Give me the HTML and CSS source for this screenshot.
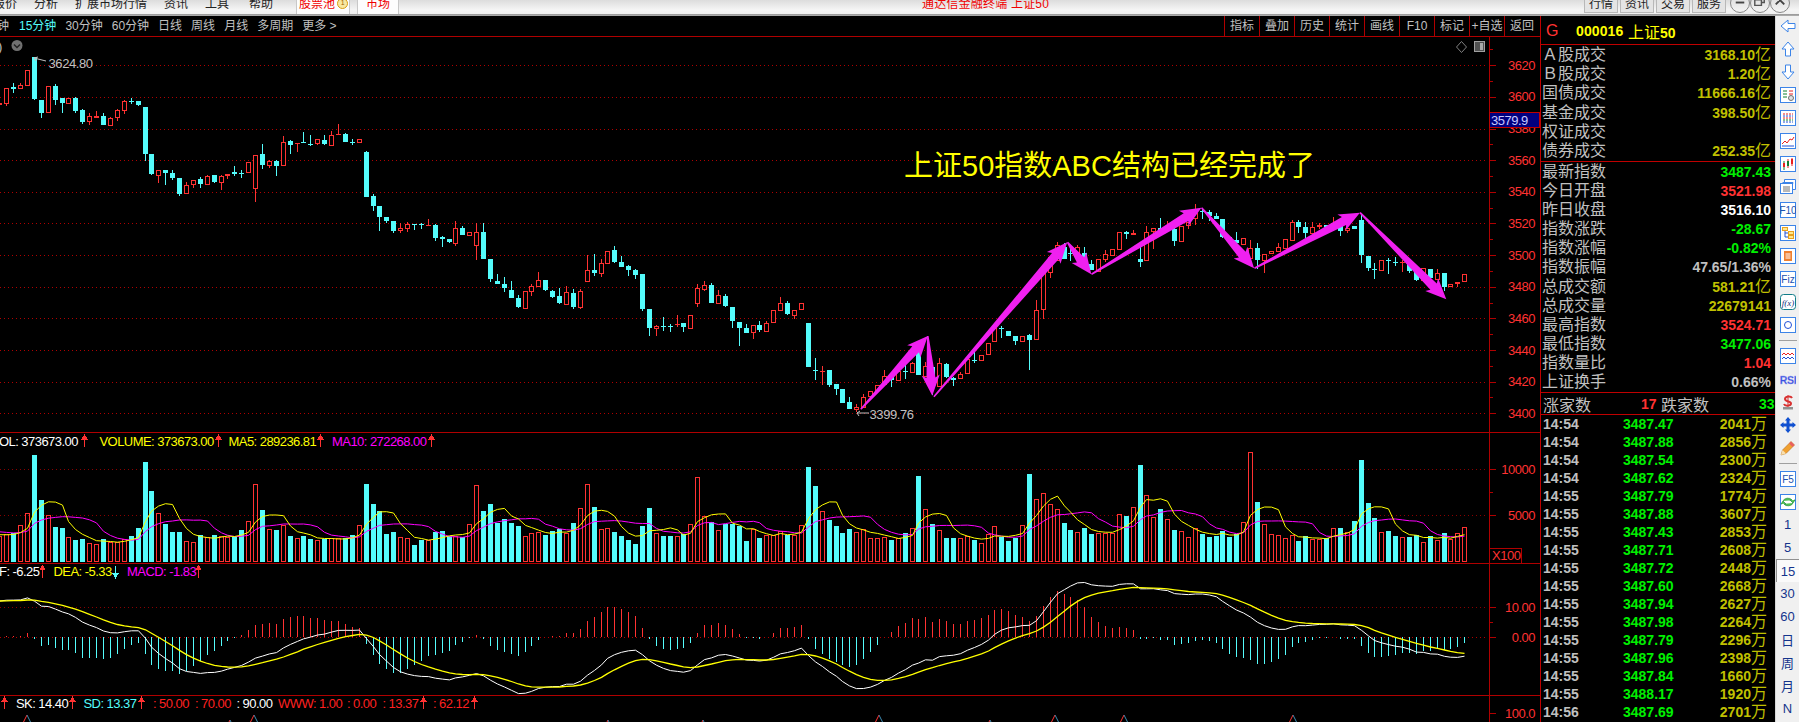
FILE: index.html
```html
<!DOCTYPE html>
<html lang="zh">
<head>
<meta charset="utf-8">
<title>上证50</title>
<link rel="stylesheet" href="styles.css">
<script src="chart.js" defer></script>
</head>
<body>
<header class="menubar">
  <nav class="menu">
    <span class="menu-item">报价</span>
    <span class="menu-item">分析</span>
    <span class="menu-item">扩展市场行情</span>
    <span class="menu-item">资讯</span>
    <span class="menu-item">工具</span>
    <span class="menu-item menu-help">帮助</span>
    <span class="menu-tab menu-tab-pool">股票池<i class="badge">1</i></span>
    <span class="menu-tab">市场</span>
  </nav>
  <div class="title">通达信金融终端 上证50</div>
  <div class="win-tools">
    <span class="win-btn">行情</span>
    <span class="win-btn">资讯</span>
    <span class="win-btn">交易</span>
    <span class="win-btn">服务</span>
    <span class="win-ctl"><svg viewBox="0 0 19 19"><path d="M5 9h9" class="ctl-line"/></svg></span>
    <span class="win-ctl"><svg viewBox="0 0 19 19"><path d="M4 6h7v6H4zM7 6V3h7v6h-3" class="ctl-thin"/></svg></span>
    <span class="win-ctl"><svg viewBox="0 0 19 19"><path d="M5 2l9 9M14 2l-9 9" class="ctl-line"/></svg></span>
  </div>
</header>

<main class="main">
  <section class="chart-col">
    <div class="tabs">
      <div class="periods">
        <span class="period">钟</span>
        <span class="period active">15分钟</span>
        <span class="period">30分钟</span>
        <span class="period">60分钟</span>
        <span class="period">日线</span>
        <span class="period">周线</span>
        <span class="period">月线</span>
        <span class="period">多周期</span>
        <span class="period">更多 &gt;</span>
      </div>
      <div class="actions">
        <span class="action">指标</span>
        <span class="action">叠加</span>
        <span class="action">历史</span>
        <span class="action">统计</span>
        <span class="action">画线</span>
        <span class="action">F10</span>
        <span class="action">标记</span>
        <span class="action">+自选</span>
        <span class="action">返回</span>
      </div>
    </div>
    <svg id="price" class="pane pane-price" viewBox="0 37 1540 395"></svg>
    <svg id="volume" class="pane pane-volume" viewBox="0 433 1540 130"></svg>
    <svg id="macd" class="pane pane-macd" viewBox="0 564 1540 131"></svg>
    <svg id="kdj" class="pane pane-kdj" viewBox="0 696 1540 26"></svg>
  </section>

  <aside class="panel">
    <div class="head">
      <span class="head-g">G</span>
      <span class="head-code">000016</span>
      <span class="head-name">上证<b>50</b></span>
    </div>
    <div class="stats stats-a">
      <div class="row"><span>Ａ股成交</span><span class="val dim">3168.10<i>亿</i></span></div>
      <div class="row"><span>Ｂ股成交</span><span class="val dim">1.20<i>亿</i></span></div>
      <div class="row"><span>国债成交</span><span class="val dim">11666.16<i>亿</i></span></div>
      <div class="row"><span>基金成交</span><span class="val dim">398.50<i>亿</i></span></div>
      <div class="row"><span>权证成交</span></div>
      <div class="row"><span>债券成交</span><span class="val dim">252.35<i>亿</i></span></div>
    </div>
    <div class="stats stats-b">
      <div class="row"><span>最新指数</span><span class="val green">3487.43</span></div>
      <div class="row"><span>今日开盘</span><span class="val red">3521.98</span></div>
      <div class="row"><span>昨日收盘</span><span class="val white">3516.10</span></div>
      <div class="row"><span>指数涨跌</span><span class="val green">-28.67</span></div>
      <div class="row"><span>指数涨幅</span><span class="val green">-0.82%</span></div>
      <div class="row"><span>指数振幅</span><span class="val grey">47.65/1.36%</span></div>
      <div class="row"><span>总成交额</span><span class="val dim">581.21<i>亿</i></span></div>
      <div class="row"><span>总成交量</span><span class="val dim">22679141</span></div>
      <div class="row"><span>最高指数</span><span class="val red">3524.71</span></div>
      <div class="row"><span>最低指数</span><span class="val green">3477.06</span></div>
      <div class="row"><span>指数量比</span><span class="val red">1.04</span></div>
      <div class="row"><span>上证换手</span><span class="val grey">0.66%</span></div>
    </div>
    <div class="breadth">
      <span>涨家数</span><span class="val red b-up">17</span>
      <span class="b-down">跌家数</span><span class="val green b-down-n">33</span>
    </div>
    <div class="trades">
      <div class="trade"><span>14:54</span><span class="tp">3487.47</span><span class="tv">2041<i>万</i></span></div>
      <div class="trade"><span>14:54</span><span class="tp">3487.88</span><span class="tv">2856<i>万</i></span></div>
      <div class="trade"><span>14:54</span><span class="tp">3487.54</span><span class="tv">2300<i>万</i></span></div>
      <div class="trade"><span>14:54</span><span class="tp">3487.62</span><span class="tv">2324<i>万</i></span></div>
      <div class="trade"><span>14:55</span><span class="tp">3487.79</span><span class="tv">1774<i>万</i></span></div>
      <div class="trade"><span>14:55</span><span class="tp">3487.88</span><span class="tv">3607<i>万</i></span></div>
      <div class="trade"><span>14:55</span><span class="tp">3487.43</span><span class="tv">2853<i>万</i></span></div>
      <div class="trade"><span>14:55</span><span class="tp">3487.71</span><span class="tv">2608<i>万</i></span></div>
      <div class="trade"><span>14:55</span><span class="tp">3487.72</span><span class="tv">2448<i>万</i></span></div>
      <div class="trade"><span>14:55</span><span class="tp">3487.60</span><span class="tv">2668<i>万</i></span></div>
      <div class="trade"><span>14:55</span><span class="tp">3487.94</span><span class="tv">2627<i>万</i></span></div>
      <div class="trade"><span>14:55</span><span class="tp">3487.98</span><span class="tv">2264<i>万</i></span></div>
      <div class="trade"><span>14:55</span><span class="tp">3487.79</span><span class="tv">2296<i>万</i></span></div>
      <div class="trade"><span>14:55</span><span class="tp">3487.96</span><span class="tv">2398<i>万</i></span></div>
      <div class="trade"><span>14:55</span><span class="tp">3487.84</span><span class="tv">1660<i>万</i></span></div>
      <div class="trade"><span>14:55</span><span class="tp">3488.17</span><span class="tv">1920<i>万</i></span></div>
      <div class="trade"><span>14:56</span><span class="tp">3487.69</span><span class="tv">2701<i>万</i></span></div>
    </div>
  </aside>

  <aside class="toolbar">
    <span class="tool tool-first"><svg viewBox="0 0 16 16"><path class="ic" d="M1 8l7-6v3.500h7v5H8V14z"/></svg></span>
    <span class="tool"><svg viewBox="0 0 16 16"><path class="ic" d="M8 1l6 7h-3.500v7h-5V8H2z"/></svg></span>
    <span class="tool"><svg viewBox="0 0 16 16"><path class="ic" d="M8 15l6-7h-3.500V1h-5v7H2z"/></svg></span>
    <span class="tool"><svg viewBox="0 0 16 16"><rect class="box" x=".5" y=".5" width="15" height="15"/><path class="g" d="M3 4h4M3 7h4M3 10h4"/><path class="r" d="M9 4h4M9 7h4"/><circle class="gear" cx="11" cy="11" r="2.500"/></svg></span>
    <span class="tool"><svg viewBox="0 0 16 16"><rect class="box" x=".5" y=".5" width="15" height="15"/><path class="r dash" d="M3 4h10M3 8h10"/><path class="b dash" d="M3 6h10M3 12h10"/><path class="g dash" d="M3 10h10"/></svg></span>
    <span class="tool"><svg viewBox="0 0 16 16"><rect class="box" x=".5" y=".5" width="15" height="15"/><path class="r" d="M2 11l3-3 2 2 3-4 2 1 2-3"/><path class="b" d="M2 13h12"/></svg></span>
    <span class="tool"><svg viewBox="0 0 16 16"><rect class="box" x=".5" y=".5" width="15" height="15"/><path class="g" d="M4 5v9"/><rect class="rf" x="3" y="7" width="2" height="4"/><path class="r" d="M8 3v9"/><rect class="gf" x="7" y="5" width="2" height="5"/><path class="r" d="M12 2v8"/><rect class="rf" x="11" y="3" width="2" height="5"/></svg></span>
    <span class="tool"><svg viewBox="0 0 16 16"><path class="ic" d="M4.500 3.500V.5h11v10H13M2.500 3.500h10.500v1"/><rect class="box" x=".5" y="4.500" width="12" height="10"/><path class="grey-l" d="M3 8h7M3 10h7M3 12h7"/></svg></span>
    <span class="tool"><svg viewBox="0 0 16 16"><rect class="box" x=".5" y=".5" width="15" height="15"/><text class="ict" x="8" y="12">F10</text></svg></span>
    <span class="tool"><svg viewBox="0 0 16 16"><rect class="box" x=".5" y=".5" width="15" height="15"/><rect class="o" x="2.500" y="2.500" width="5" height="3"/><rect class="o" x="8.500" y="6.500" width="5" height="3"/><rect class="o" x="8.500" y="10.500" width="5" height="3"/><path class="b" d="M5 6v6h3M5 8h3"/></svg></span>
    <span class="tool"><svg viewBox="0 0 16 16"><rect class="box" x=".5" y=".5" width="15" height="15"/><rect class="of" x="4" y="3" width="8" height="10"/><path class="w" d="M5.500 6h5M5.500 8h5M5.500 10h5"/></svg></span>
    <span class="tool"><svg viewBox="0 0 16 16"><rect class="box" x=".5" y=".5" width="15" height="15"/><text class="ict" x="8" y="12">Fiz</text></svg></span>
    <span class="tool"><svg viewBox="0 0 16 16"><rect class="box teal" x=".5" y=".5" width="15" height="15" rx="3"/><text class="icf" x="8" y="12">f(x)</text></svg></span>
    <span class="tool"><svg viewBox="0 0 16 16"><rect class="box" x=".5" y=".5" width="15" height="15"/><circle class="b" cx="8" cy="8" r="3.500"/></svg></span>
    <span class="tool-sep"></span>
    <span class="tool"><svg viewBox="0 0 16 16"><rect class="box" x=".5" y=".5" width="15" height="15"/><path class="r" d="M2 7l2-2 2 2 2-2 2 2 2-2 2 2"/><path class="b" d="M2 11l2-2 2 2 2-2 2 2 2-2 2 2"/></svg></span>
    <span class="tool"><svg viewBox="0 0 16 16"><text class="icr" x="8" y="12.500">RSI</text></svg></span>
    <span class="tool"><svg viewBox="0 0 16 16"><path class="money-base" d="M3 13h10v2.500H3z"/><path class="money" d="M12 4c-1-2-7-2-7 1 0 3 6 2 6 4.500s-6 3-7 .5"/><path class="money-thin" d="M8 1v12"/></svg></span>
    <span class="tool"><svg viewBox="0 0 16 16"><path class="move" d="M8 0l3 3.500H9.500v3h3V5L16 8l-3.500 3V9.500h-3v3H11L8 16l-3-3.500h1.500v-3h-3V11L0 8l3.500-3v1.500h3v-3H5z"/></svg></span>
    <span class="tool"><svg viewBox="0 0 16 16"><path class="pencil" d="M1 15l1.500-5L11 1.500 14.500 5 6 13.500z"/><path class="pencil-tip" d="M1 15l1.500-5L6 13.500z"/><path class="pencil-end" d="M11 1.500L14.500 5l-2 2L9 3.500z"/></svg></span>
    <span class="tool-sep"></span>
    <span class="tool"><svg viewBox="0 0 16 16"><rect class="box" x=".5" y=".5" width="15" height="15"/><text class="ict" x="8" y="12">F5</text></svg></span>
    <span class="tool"><svg viewBox="0 0 16 16"><rect class="box" x=".5" y=".5" width="15" height="15"/><path class="refresh" d="M3 7a5 4 0 0 1 9-1h-2l3 3 2-3h-1M13 9a5 4 0 0 1-9 1h2l-3-3-2 3h1"/></svg></span>
    <span class="tool tool-t">1</span>
    <span class="tool tool-t">5</span>
    <span class="tool tool-t tool-on">15</span>
    <span class="tool tool-t">30</span>
    <span class="tool tool-t">60</span>
    <span class="tool tool-t">日</span>
    <span class="tool tool-t">周</span>
    <span class="tool tool-t">月</span>
    <span class="tool tool-t">N</span>
  </aside>
</main>
</body>
</html>
```

FILE: styles.css
```css
* { box-sizing: border-box; }
html, body { margin: 0; height: 100%; background: #000; overflow: hidden; }
body {
  width: 1799px; height: 722px;
  font-family: "Liberation Sans", "Noto Sans CJK SC", sans-serif;
  display: flex; flex-direction: column;
}
i { font-style: normal; }

.menubar {
  height: 16px; flex: none; display: flex; align-items: flex-start;
  background: linear-gradient(#dcdcdc, #f4f4f4 60%, #f0f0f0 85%, #9a9a9a 90%, #b0b0b0);
  font-size: 12px; line-height: 8px; color: #222; overflow: hidden; white-space: nowrap;
}
.menu { display: flex; align-items: flex-start; gap: 17px; margin-left: -7px; flex: none; }
.menu-help { margin-left: 3px; }
.menu-tab {
  height: 14px; padding: 0 8px; color: #f00000; background: #fdfdfd; flex: none;
  border-left: 1px solid #c8c8c8; border-right: 1px solid #c8c8c8;
  display: flex; align-items: flex-start;
}
.menu-tab-pool { margin-left: 6px; margin-right: -10px; padding: 0 0 0 2px; width: 54px; }
.badge {
  width: 11px; height: 11px; border-radius: 50%; border: 1.500px solid #d89c10; background: #f8e8a0;
  margin: -2px 0 0 2px; flex: none; font-size: 7px; line-height: 8px; text-align: center; color: #a06000;
}
.title { margin: 0 auto; padding-right: 12px; color: #f00000; letter-spacing: .2px; }
.win-tools { display: flex; align-items: flex-start; margin-right: 9px; flex: none; }
.win-btn {
  width: 34px; height: 13px; margin-right: 2px; text-align: center;
  background: #e4e4e4; border: 1px solid #b8b8b8; border-top: 0; color: #222;
}
.win-ctl {
  width: 20px; height: 20px; margin-top: -7px; border-radius: 50%; flex: none;
  background: linear-gradient(#d8d8d8, #f4f4f4); border: 1px solid #888;
}
.win-btn + .win-ctl { margin-left: 2px; }
.win-ctl svg { display: block; width: 100%; height: 100%; }
.ctl-line { stroke: #444; stroke-width: 2; fill: none; }
.ctl-thin { stroke: #555; stroke-width: 1.500; fill: none; }

.main { flex: 1; display: flex; min-height: 0; }
.chart-col { width: 1540px; flex: none; display: flex; flex-direction: column; background: #000; }

.tabs {
  height: 21px; flex: none; display: flex; justify-content: space-between;
  border-bottom: 1px solid #b00000; font-size: 12px; line-height: 20px; color: #c0c0c0; overflow: hidden;
}
.periods { display: flex; gap: 9px; margin-left: -3px; white-space: nowrap; }
.period:nth-child(2) { margin-left: 1px; }
.period.active { color: #54fcfc; }
.actions { display: flex; margin-right: 1px; }
.action { width: 35px; text-align: center; border-left: 1px solid #b00000; white-space: nowrap; }

.pane { display: block; width: 1540px; flex: none; border-bottom: 1px solid #b00000; box-sizing: content-box; }
.pane-price { height: 395px; }
.pane-volume { height: 130px; }
.pane-macd { height: 131px; }
.pane-kdj { height: 26px; border-bottom: 0; }

.axis { stroke: #b00000; stroke-width: 1; shape-rendering: crispEdges; }
.grid { stroke: #b00000; stroke-width: 1; stroke-dasharray: 1 3; shape-rendering: crispEdges; }
.grid-dim { stroke: #8a0000; }
.cand { shape-rendering: crispEdges; }
.up-body { fill: #000; stroke: #ff3232; stroke-width: 1; }
.up-hollow { fill: none; stroke: #ff3232; stroke-width: 1; }
.down-body { fill: #54fcfc; }
.up-wick { stroke: #ff3232; stroke-width: 1; }
.down-wick { stroke: #54fcfc; stroke-width: 1; }
.ax-text { font-size: 13px; letter-spacing: -.5px; fill: #ff3232; text-anchor: end; }
.ax-x100 { text-anchor: start; }
.ax-box { fill: none; stroke: #b00000; shape-rendering: crispEdges; }
.cur-box { fill: #000080; stroke: #c00000; shape-rendering: crispEdges; }
.cur-text { font-size: 13px; letter-spacing: -.5px; fill: #c8c8ff; }
.mark-text { font-size: 13px; letter-spacing: -.4px; fill: #c0c0c0; }
.mark-line { fill: none; stroke: #c0c0c0; stroke-width: 1; }
.note { font-size: 29px; fill: #ffff00; font-family: "Liberation Sans", "Noto Sans CJK SC", sans-serif; }
.wedge { fill: #f020f0; }
.lg { font-size: 13px; letter-spacing: -.55px; }
.c-white { fill: #ffffff; }
.c-yellow { fill: #ffff00; }
.c-magenta { fill: #ff00ff; }
.c-cyan { fill: #54fcfc; }
.c-red { fill: #ff2020; }
.flag-up { stroke: #ff3232; fill: #ff3232; stroke-width: 1; shape-rendering: crispEdges; }
.flag-down { stroke: #54fcfc; fill: #54fcfc; stroke-width: 1; shape-rendering: crispEdges; }
.ln { fill: none; stroke-width: 1; }
.ln-y { stroke: #ffff00; }
.ln-m { stroke: #ff00ff; }
.ln-w { stroke: #ffffff; }
.ln-r { stroke: #ff3232; }
.ln-b { stroke: #3c8cb4; }
.ln-thick { stroke-width: 1.300; }
.ico-grey { fill: #707070; }
.ico-chev { fill: none; stroke: #222; stroke-width: 1.500; }
.ico-out { fill: none; stroke: #808080; stroke-width: 1; }
.ico-fill { fill: #505050; stroke: #a0a0a0; stroke-width: 1; shape-rendering: crispEdges; }
.ico-bar { fill: #a8a8a8; }

.panel { width: 235px; flex: none; background: #000; border-left: 1px solid #c00000; display: flex; flex-direction: column; color: #c0c0c0; font-size: 16px; overflow: hidden; }
.head { height: 29px; flex: none; border-top: 0; border-bottom: 1px solid #c00000; display: flex; align-items: center; padding-top: 1px; }
.head-g { color: #ff3232; width: 35px; padding-left: 5px; }
.head-code { color: #ffff00; font-weight: 700; font-size: 14px; letter-spacing: .1px; width: 52px; }
.head-name { color: #ffff00; }
.head-name b { font-size: 14px; }
.stats { flex: none; display: flex; flex-direction: column; border-bottom: 1px solid #c00000; padding: 0 4px 0 1px; }
.stats-a { height: 117px; }
.stats-b { height: 231px; }
.row { flex: 1; display: flex; justify-content: space-between; align-items: center; line-height: 1; white-space: nowrap; }
.val { font-weight: 700; font-size: 14px; }
.val i, .tv i { font-weight: 400; font-size: 16px; }
.dim { color: #c0c000; }
.green { color: #00f000; }
.red { color: #ff3232; }
.white { color: #fff; }
.grey { color: #c0c0c0; }
.breadth { height: 22px; flex: none; border-bottom: 1px solid #c00000; display: flex; align-items: center; padding-left: 2px; }
.b-up { margin-left: 50px; width: 20px; }
.b-down { flex: none; }
.b-down-n { margin-left: 50px; }
.trades { flex: 1; font-weight: 700; font-size: 14px; padding-left: 2px; }
.trade { height: 18px; display: grid; grid-template-columns: 80px 76px 71px; align-items: center; line-height: 18px; }
.tp { color: #00f000; }
.tv { color: #c0c000; text-align: right; padding-right: 3px; }

.toolbar { flex: 1; background: #f0f0f0; border-left: 1px solid #d8d8d8; display: flex; flex-direction: column; align-items: center; overflow: hidden; }
.tool { height: 23px; width: 100%; flex: none; display: flex; align-items: center; justify-content: center; }
.tool-first { margin-top: -2px; }
.tool svg { width: 16px; height: 16px; display: block; }
.tool-sep { height: 8px; width: 18px; flex: none; display: flex; align-items: center; }
.tool-sep::before { content: ""; display: block; width: 100%; height: 1px; background: #a0a0a0; }
.tool-t { color: #14348c; font-size: 13px; }
.tool-on { background: #fafafa; border-top: 1px solid #909090; border-left: 1px solid #909090; }
.ic, .box { fill: #fff; stroke: #3c84e8; stroke-width: 1; }
.teal { stroke: #107c88; }
.g, .r, .b, .o, .w, .grey-l { fill: none; stroke-width: 1; }
.g { stroke: #108030; }
.r { stroke: #e82020; }
.b { stroke: #2050d8; }
.o { stroke: #e8a020; fill: #ffe88c; }
.w { stroke: #fff; }
.grey-l { stroke: #707070; }
.dash { stroke-dasharray: 2 1; }
.gear { fill: #e0e0e0; stroke: #707070; }
.rf { fill: #e82020; }
.gf { fill: #108030; }
.of { fill: #f08030; }
.ict { font-size: 10px; fill: #2050b0; text-anchor: middle; font-family: "Liberation Sans", sans-serif; }
.icf { font-size: 9px; font-style: italic; fill: #103080; text-anchor: middle; font-family: "Liberation Serif", serif; }
.icr { font-size: 10.500px; font-weight: 700; fill: #3850e0; text-anchor: middle; letter-spacing: -.3px; stroke: #a0a8f0; stroke-width: .3px; }
.money { fill: none; stroke: #d83030; stroke-width: 2; }
.money-thin { fill: none; stroke: #d83030; stroke-width: 1; }
.money-base { fill: #909090; }
.move { fill: #1050d0; }
.pencil { fill: #f0a030; stroke: #a86010; stroke-width: .5; }
.pencil-tip { fill: #f8e0b0; }
.pencil-end { fill: #e86060; }
.refresh { fill: #50c050; stroke: #209040; stroke-width: .7; }
```

FILE: chart.js
```js
(function () {
  // Candle data: t=body top, b=body bottom, h=high, l=low (screen rows x3, relative to a base row)
  var segments = [
    [40, "R190,194 R145,191,,197 C141,147,130,158 R135,146,130 R91,137 C52,178,50,180 C180,218,,234 R139,218 C138,180,132,195 C175,189,,218 R175,191 C174,213,172,218 C210,246,208,252 R229,245,219,255 R229,233,213 C228,255,219 R235,257,232 R211,233,207,243 R184,212,180,221 C182,184,174,191 C183,195,,198 C201,342,,362 C342,402,,405 R391,407,,429 C391,398,,434 C399,414,390,419 C414,462,,467 R436,461,427 R419,434,,443 C417,431,411,444 R409,434,406,436 C406,426,,428 R409,428,406,450 R401,407,,416 C397,401,378,409 C399,400,390,413 R367,398 R346,448,,486 C343,374,312,387 R364,377,361,384 C364,378,360,408 R307,377,289 C304,314,300,342 R310,313,,336 C306,308,277 C311,313,285,318 R298,311,,314 C301,312,285,315 R286,317,274 R281,286,252 C282,305,279 C305,307,297,315 R298,308 C336,470,333 C468,497,462,513 C498,530,,573 C532,543,,549 C544,572,,578 R565,572,550,578 R552,566,547,575 C552,554,,570 C553,555,549,566 R556,559,537"],
    [220, "C16,53,13,62 C52,56,47,80 C57,66,,70 R25,72,3,77 C24,44,18 R37,49 R37,77,10,120"],
    [220, "C36,117,8 C117,177,,186 C183,193,163 C192,205,171,215 C210,235,183 C234,262,226,264 R214,267 R198,215,193,228 R181,200,156 C180,210,,213 C213,232,209,234 C228,249,204,252 R217,254,198 C219,262,208,266 R214,263,208,266 R151,185,104 C151,159,102,167 R130,161,118,171 R94,131 C90,126,78,130 C126,141,108 C138,150,135,168 C150,165,146,177 C162,267,,273 C267,323,,348 R319,326,316,348 C318,321,291,333 C318,322,312,335 R312,315,285,320 C309,321,,336 R286,326 R205,251,192,261 R196,209,183,212 C195,249,190 R226,251,209 C228,258,222,261 C261,303,,324 C306,324,,378 C324,339,312 R316,339,,357 C316,330,303,335 R310,335,302 R271,308 R250,272,231 C249,282,243,285 R271,288,,297 R250,270 C309,441 C451,453,415,480 R453,455,438,495 C450,495,,500 C492,507,,526 C507,549 C546,567,531 R562,569,552,575 R531,564,522 R514,532 R495,514 R469,496,450 C470,480,,500 R452,484 C452,455,435,477 R429,458,425 C395,465 R438,470,425 C440,500,,524 R430,500,415 C432,472,430,475 C474,479,470,497 R462,478,457 R418,461 C420,423,395,428 R406,424 R370,406 R325,367"],
    [190, "C414,417,408,444 C424,437 C438,452,,465 R439,456 C435,450,432,540 R361,449,330 R247,361,,388 R200,248,,263 R165,214,156 C170,207,160 C189,191,172,212 R170,205,165 C189,201,170,225 C222,240,210 R208,245 R192,209,180,215 R178,197 R127,179 C126,131,123,147 R130,136,121 C207,215,170,230 R127,212,108 R115,127,,178 C115,125,84 R115,118,94 C117,152,112,167 R107,155 R95,107,,118 R68,88,42,104 C64,66,55,87 C66,78,60,92 C78,88,69 C87,140,,145 C140,150 C150,158,127 R145,164 R175,208,150 C174,209,160,238 R193,213,,248 R183,191 R172,185,160 R148,176 R97,152,90 C97,110,90,128 C112,128,96,143 R112,131,97 R105,112,100,118 C104,110 R100,108,80 C108,123,,137 R113,124,,130 C108,116 C90,194,76,218 C199,233,,242 C237,238,220,266 R211,242 C210,213,205,251 C215,219,202,228 R215,217,210,245 C222,243,,250 C245,270,,273 R235,272 C238,265 R250,270,238 C250,290,,302 R281,292 R275,281,,290 R253,275"]
  ];
  var candles = [];
  segments.forEach(function (seg) {
    seg[1].split(" ").forEach(function (s) {
      var up = s[0] === "R";
      var p = s.slice(1).split(",");
      var t = +p[0], b = +p[1];
      var h = p[2] ? +p[2] : t, l = p[3] ? +p[3] : b;
      candles.push({
        up: up,
        t: seg[0] + t / 3, b: seg[0] + b / 3,
        h: seg[0] + h / 3, l: seg[0] + l / 3
      });
    });
  });

  // Volume bar tops (rows x3 from 420); negative = cyan bar. First value is index -1.
  var vols = [347,
    343,-338,316,280,-105,-240,286,-321,-324,352,
    -360,-357,370,372,-357,367,367,357,-348,-324,
    -126,-213,280,-312,-336,-336,364,367,-345,352,
    -345,348,352,-351,-330,304,193,-270,328,-330,
    314,-348,355,-348,-357,361,-357,355,355,-355,
    -345,316,-192,-252,-273,-342,-336,352,355,-375,
    -360,360,-336,-333,-348,348,-352,312,195,-273,
    -252,-309,-297,-309,-318,348,340,336,-345,-333,
    -328,340,-309,265,192,-261,328,325,-336,-348,
    -360,-372,-318,-264,340,-348,-348,349,-342,313,
    172,289,-306,330,-312,-311,-318,-363,326,-354,
    345,345,332,-345,345,316,-141,-198,273,-300,
    -318,-339,-327,336,328,355,355,352,-360,355,
    -339,325,-168,268,-312,330,-354,-354,355,348,
    -360,370,343,319,-351,-363,-354,316,-162,238,
    220,253,268,-309,-330,337,-324,-342,340,340,
    339,283,-288,262,-135,226,292,-267,298,-330,
    334,352,325,-342,-351,-348,-333,-351,-342,307,
    97,-246,313,343,346,355,345,-363,-348,358,
    358,-354,325,-324,336,-303,-120,-249,-294,337,
    -333,-348,352,-351,-345,367,-348,361,-339,358,
    340,322];

  function xOf(i) { return Math.round(6.3 + 6.91 * i); }
  function idx(n) { return n - 1; }

  function yPrice(p) { return 413.3 - (p - 3400) * 1.582; }

  function vline(x, a, b, c) { return '<line class="' + c + '" x1="' + (x + .5) + '" x2="' + (x + .5) + '" y1="' + a + '" y2="' + b + '"/>'; }
  function hline(a, b, y, c) { return '<line class="' + c + '" x1="' + a + '" x2="' + b + '" y1="' + y + '" y2="' + y + '"/>'; }
  function txt(x, y, s, c) { return '<text class="' + c + '" x="' + x + '" y="' + y + '">' + s + '</text>'; }
  function poly(pts, c) { return '<polyline class="' + c + '" points="' + pts.map(function (p) { return p[0].toFixed(1) + ',' + p[1].toFixed(1); }).join(' ') + '"/>'; }
  function axisLabel(y, s) { return txt(1535, y + 4.5, s, 'ax-text'); }

  /* ---------- price pane ---------- */
  function wedge(x1, y1, x2, y2) {
    var dx = x2 - x1, dy = y2 - y1, L = Math.sqrt(dx * dx + dy * dy);
    var ux = dx / L, uy = dy / L, nx = -uy, ny = ux;
    var head = 18, neck = L - head, barbAt = L - head * 1.15;
    var s = 4.5;
    function P(a, n) { return (x1 + ux * a + nx * n).toFixed(1) + ',' + (y1 + uy * a + ny * n).toFixed(1); }
    return '<polygon class="wedge" points="' + [P(0, 0.8), P(neck, s), P(barbAt, 9), P(L, 0), P(barbAt, -9), P(neck, -s), P(0, -0.8)].join(' ') + '"/>';
  }

  var out = [];
  [3620, 3600, 3580, 3560, 3540, 3520, 3500, 3480, 3460, 3440, 3420, 3400].forEach(function (p) {
    var y = Math.round(yPrice(p)) + .5;
    out.push(hline(0, 1487, y, 'grid'));
    out.push(hline(1489, 1496, y, 'axis'));
    out.push(axisLabel(yPrice(p), p));
    out.push(hline(1489, 1493, Math.round(yPrice(p + 10)) + .5, 'axis'));
  });
  out.push(vline(1489, 37, 432, 'axis'));
  candles.forEach(function (c, n) {
    var x = xOf(idx(n));
    var t = Math.round(c.t), b = Math.max(Math.round(c.b), t + 1);
    if (c.up) {
      out.push(vline(x, Math.round(c.h), t, 'cand up-wick'));
      out.push(vline(x, b, Math.round(c.l), 'cand up-wick'));
      if (b - t <= 1) out.push(hline(x - 2, x + 3, t + .5, 'cand up-wick'));
      else out.push('<rect class="cand up-body" x="' + (x - 1.5) + '" y="' + (t + .5) + '" width="4" height="' + (b - t - 1) + '"/>');
    } else {
      out.push(vline(x, Math.round(c.h), Math.round(c.l), 'cand down-wick'));
      out.push('<rect class="cand down-body" x="' + (x - 2) + '" y="' + t + '" width="5" height="' + (b - t) + '"/>');
    }
  });
  out.push(wedge(860.8, 409.3, 927.8, 336));
  out.push(wedge(927.8, 336, 932.3, 395.7));
  out.push(wedge(933.9, 396.7, 1067.2, 242.3));
  out.push(wedge(1067.5, 242.3, 1091.3, 274.3));
  out.push(wedge(1091.5, 274.3, 1201.4, 207.7));
  out.push(wedge(1201.6, 207.7, 1254.1, 268.3));
  out.push(wedge(1254.5, 268.3, 1359.9, 212.7));
  out.push(wedge(1360, 212.7, 1446.3, 299.3));
  out.push(txt(904, 176, '上证50指数ABC结构已经完成了', 'note'));
  out.push(txt(48.5, 67.5, '3624.80', 'mark-text'));
  out.push('<path class="mark-line" d="M34 58l12 3M34 58l4-1M34 58l2 3"/>');
  out.push(txt(869.5, 419, '3399.76', 'mark-text'));
  out.push('<path class="mark-line" d="M857 413h12M857 413l3-2M857 413l2 3"/>');
  out.push(txt(-2, 51, ')', 'mark-text'));
  out.push('<circle class="ico-grey" cx="17" cy="45.500" r="5.500"/><path class="ico-chev" d="M14 44.500l3 3 3-3"/>');
  out.push('<path class="ico-out" d="M1461.500 41.500l5 5.500-5 5.500-5-5.500z"/>');
  out.push('<rect class="ico-fill" x="1474.500" y="41.500" width="10" height="10" rx="1"/><rect class="ico-bar" x="1480" y="43" width="3" height="7"/>');
  out.push('<rect class="cur-box" x="1489.500" y="112.500" width="50" height="15"/>');
  out.push(txt(1491, 124.500, '3579.9', 'cur-text'));
  document.getElementById('price').innerHTML = out.join('');

  /* ---------- flags ---------- */
  function flag(x, y, up) {
    var mid = y;
    if (up) return '<path class="flag-up" d="M' + (x + .5) + ' ' + (mid + 6) + 'V' + (mid - 3) + '"/><polygon class="flag-up" points="' + (x - 2) + ',' + (mid - 2) + ' ' + (x + .5) + ',' + (mid - 6) + ' ' + (x + 3) + ',' + (mid - 2) + '"/>';
    return '<path class="flag-down" d="M' + (x + .5) + ' ' + (mid - 6) + 'V' + (mid + 3) + '"/><polygon class="flag-down" points="' + (x - 2) + ',' + (mid + 2) + ' ' + (x + .5) + ',' + (mid + 6) + ' ' + (x + 3) + ',' + (mid + 2) + '"/>';
  }
  function legend(items, y) {
    return items.map(function (it) {
      if (it[1] === 'up' || it[1] === 'down') return flag(it[0], y, it[1] !== 'down');
      return txt(it[0], y + 4.5, it[1], 'lg ' + it[2]);
    }).join('');
  }

  /* ---------- volume pane ---------- */
  out = [];
  [469, 515].forEach(function (y) { out.push(hline(0, 1487, y + .5, 'grid grid-dim')); });
  out.push(vline(1489, 433, 563, 'axis'));
  out.push(hline(1489, 1496, 469.5, 'axis')); out.push(hline(1489, 1496, 515.5, 'axis')); out.push(hline(1489, 1493, 492.5, 'axis'));
  out.push(axisLabel(469.3, '10000')); out.push(axisLabel(515.3, '5000'));
  var heights = vols.map(function (v) { return (426 - Math.abs(v)) / 3; });
  vols.forEach(function (v, n) {
    var x = xOf(idx(n)), top = Math.round(420 + Math.abs(v) / 3);
    if (v > 0) out.push('<rect class="cand up-hollow" x="' + (x - 1.5) + '" y="' + (top + .5) + '" width="4" height="' + (561.5 - top - .5) + '"/>');
    else out.push('<rect class="cand down-body" x="' + (x - 2) + '" y="' + top + '" width="5" height="' + (562 - top) + '"/>');
  });
  function ma(len) {
    var pts = [];
    var pad = [34, 34, 34, 34, 34, 30, 28, 28, 27, 27];
    var all = pad.concat(heights);
    for (var n = 0; n < heights.length; n++) {
      var sum = 0;
      for (var k = 0; k < len; k++) sum += all[n + pad.length - k];
      pts.push([xOf(idx(n)) + .5, 562 - sum / len]);
    }
    return pts;
  }
  out.push(poly(ma(10), 'ln ln-m'));
  out.push(poly(ma(5), 'ln ln-y'));
  out.push(legend([
    [-1, 'OL: 373673.00', 'c-white'], [84, 'up'],
    [99.5, 'VOLUME: 373673.00', 'c-yellow'], [218, 'up'],
    [228.5, 'MA5: 289236.81', 'c-yellow'], [320, 'up'],
    [332, 'MA10: 272268.00', 'c-magenta'], [431, 'up']
  ], 441));
  out.push('<rect class="ax-box" x="1489.500" y="548.500" width="32" height="15"/>');
  out.push(txt(1492, 560, 'X100', 'ax-text ax-x100'));
  document.getElementById('volume').innerHTML = out.join('');

  /* ---------- MACD pane ---------- */
  out = [];
  out.push(hline(0, 1487, 607.5, 'grid grid-dim'));
  out.push(hline(0, 1487, 637.5, 'grid'));
  out.push(vline(1489, 564, 695, 'axis'));
  out.push(hline(1489, 1496, 607.5, 'axis')); out.push(hline(1489, 1496, 637.5, 'axis')); out.push(hline(1489, 1493, 622.5, 'axis'));
  out.push(axisLabel(607.3, '10.00')); out.push(axisLabel(637.3, '0.00'));
  var closes = candles.map(function (c) { return 3400 + (413.3 - (c.up ? c.t : c.b)) / 1.582; });
  var e12 = closes[0] - 5, e26 = e12 - 12.1, dea = 12.1;
  var white = [], yellow = [];
  var K = 3;
  closes.forEach(function (p, n) {
    if (n > 0) {
      e12 += (p - e12) * 2 / 13;
      e26 += (p - e26) * 2 / 27;
      dea += (e12 - e26 - dea) * 2 / 10;
    }
    var dif = e12 - e26, bar = 2 * (dif - dea), x = xOf(idx(n));
    white.push([x + .5, 637.3 - dif * K]);
    yellow.push([x + .5, 637.3 - dea * K]);
    if (n > 0) {
      var h = Math.round(bar * K);
      if (h !== 0) out.push(vline(x, 637, 637 - h, bar > 0 ? 'cand up-wick' : 'cand down-wick'));
    }
  });
  white.unshift([0, white[0][1]]); yellow.unshift([0, yellow[0][1]]);
  out.push(poly(white, 'ln ln-w'));
  out.push(poly(yellow, 'ln ln-y ln-thick'));
  out.push(legend([
    [-1, 'F: -6.25', 'c-white'], [42, 'up'],
    [53.5, 'DEA: -5.33', 'c-yellow'], [115, 'down'],
    [127, 'MACD: -1.83', 'c-magenta'], [198, 'up']
  ], 571.7));
  document.getElementById('macd').innerHTML = out.join('');

  /* ---------- bottom pane ---------- */
  out = [];
  out.push(vline(1489, 696, 722, 'axis'));
  out.push(hline(1489, 1496, 713.5, 'axis'));
  out.push(axisLabel(713.7, '100.0'));
  [[27, 715], [230, 720], [254, 715], [608, 720], [703, 720], [774, 722], [879, 715], [990, 720], [1055, 715], [1124, 715], [1293, 715]].forEach(function (pk) {
    var x = pk[0], y = pk[1];
    out.push(poly([[x - 5, y + 10], [x, y]], 'ln ln-r'));
    out.push(poly([[x, y], [x + 5, y + 10]], 'ln ln-b'));
  });
  out.push(legend([
    [4, 'up'],
    [16, 'SK: 14.40', 'c-white'], [72, 'up'],
    [83.5, 'SD: 13.37', 'c-cyan'], [141, 'up'],
    [153, ': 50.00', 'c-red'], [195, ': 70.00', 'c-red'],
    [236.5, ': 90.00', 'c-white'], [278, 'WWW: 1.00', 'c-red'],
    [347, ': 0.00', 'c-red'], [382.5, ': 13.37', 'c-red'], [423, 'up'],
    [433, ': 62.12', 'c-red'], [474, 'up']
  ], 703.3));
  document.getElementById('kdj').innerHTML = out.join('');
})();
```
